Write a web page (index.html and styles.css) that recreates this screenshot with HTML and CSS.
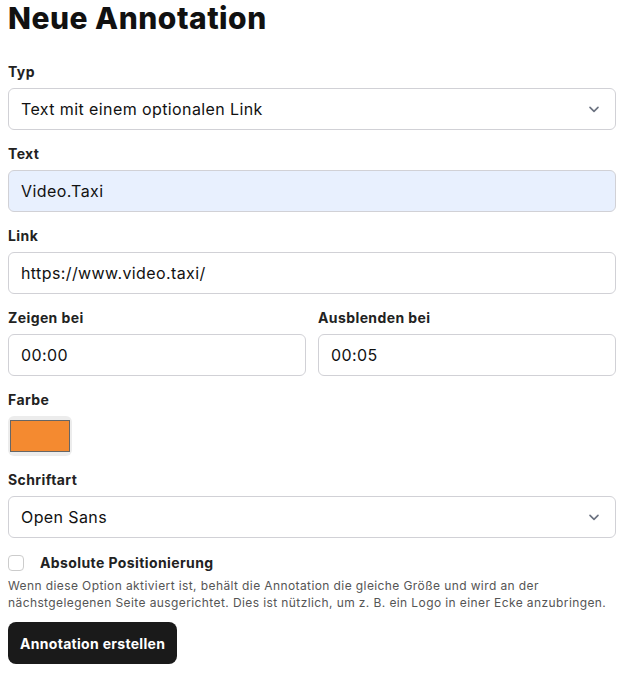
FILE: index.html
```html
<!DOCTYPE html>
<html lang="de">
<head>
  <meta charset="UTF-8" />
  <meta name="viewport" content="width=device-width, initial-scale=1" />
  <title>Neue Annotation</title>
  <link rel="stylesheet" href="styles.css">
</head>
<body>
  <form class="annotation-form">
    <h1>Neue Annotation</h1>

    <div class="field">
      <label for="type">Typ</label>
      <div class="select-wrap">
        <select id="type">
          <option>Text mit einem optionalen Link</option>
          <option>Bild</option>
        </select>
        <svg class="chevron" width="16" height="16" viewBox="0 0 20 20" aria-hidden="true">
          <path d="M5 8l5 5 5-5" fill="none" stroke="#6b7280" stroke-width="2" stroke-linecap="round" stroke-linejoin="round"/>
        </svg>
      </div>
    </div>

    <div class="field">
      <label for="text">Text</label>
      <input type="text" id="text" class="autofilled" value="Video.Taxi" />
    </div>

    <div class="field">
      <label for="link">Link</label>
      <input type="text" id="link" value="https://www.video.taxi/" />
    </div>

    <div class="row">
      <div class="field">
        <label for="start">Zeigen bei</label>
        <input type="text" id="start" value="00:00" />
      </div>
      <div class="field">
        <label for="end">Ausblenden bei</label>
        <input type="text" id="end" value="00:05" />
      </div>
    </div>

    <div class="field">
      <label for="color">Farbe</label>
      <input type="color" id="color" class="color" value="#f48a30" />
    </div>

    <div class="field">
      <label for="font">Schriftart</label>
      <div class="select-wrap">
        <select id="font">
          <option>Open Sans</option>
          <option>Roboto</option>
          <option>Lato</option>
        </select>
        <svg class="chevron" width="16" height="16" viewBox="0 0 20 20" aria-hidden="true">
          <path d="M5 8l5 5 5-5" fill="none" stroke="#6b7280" stroke-width="2" stroke-linecap="round" stroke-linejoin="round"/>
        </svg>
      </div>
    </div>

    <div class="check">
      <input type="checkbox" id="absolute" />
      <label for="absolute">Absolute Positionierung</label>
    </div>
    <p class="hint">Wenn diese Option aktiviert ist, behält die Annotation die gleiche Größe und wird an der nächstgelegenen Seite ausgerichtet. Dies ist nützlich, um z. B. ein Logo in einer Ecke anzubringen.</p>

    <button type="submit">Annotation erstellen</button>
  </form>
</body>
</html>
```

FILE: styles.css
```css
* {
  box-sizing: border-box;
}
body {
  margin: 0;
  padding: 0 8px;
  font-family: Inter, 'Noto Sans', sans-serif;
  letter-spacing: 0.4px;
  color: #111;
  background: #fff;
}

h1 {
  margin: 0 0 28px;
  font-size: 30px;
  line-height: 36px;
  font-weight: 800;
  letter-spacing: 0.5px;
}

.field {
  margin-bottom: 16px;
}

.field label {
  display: block;
  font-size: 14px;
  line-height: 16px;
  font-weight: 700;
  color: #222;
  margin-bottom: 8px;
}

input[type="text"],
select {
  width: 100%;
  height: 42px;
  padding: 0 12px;
  border: 1px solid #d1d1d6;
  border-radius: 6px;
  background: #fff;
  font-family: inherit;
  font-size: 16px;
  letter-spacing: 0.4px;
  color: #111;
  outline: none;
}

input.autofilled {
  background: #e8f0fe;
}

.select-wrap {
  position: relative;
}
select {
  appearance: none;
  -webkit-appearance: none;
}
.chevron {
  position: absolute;
  right: 14px;
  top: 13px;
  pointer-events: none;
}

.row {
  display: grid;
  grid-template-columns: 1fr 1fr;
  gap: 12px;
}

/* Farbwähler */
input.color {
  display: block;
  width: 64px;
  height: 40px;
  padding: 4px 2px;
  border: none;
  border-radius: 6px;
  background: #ececec;
  cursor: pointer;
  -webkit-appearance: none;
  appearance: none;
}
input.color::-webkit-color-swatch-wrapper {
  padding: 0;
}
input.color::-webkit-color-swatch {
  border: 1px solid #666;
  border-radius: 0;
}

.check {
  display: flex;
  align-items: center;
  gap: 16px;
  margin-top: 14px;
}
.check input {
  margin: 0;
  width: 16px;
  height: 16px;
  border: 1px solid #ccc;
  border-radius: 4px;
  background: #fff;
  -webkit-appearance: none;
  appearance: none;
}
.check label {
  font-size: 14px;
  font-weight: 700;
  color: #222;
}

.hint {
  margin: 6px 0 11px;
  font-size: 12px;
  line-height: 17px;
  color: #555;
}

button {
  height: 42px;
  padding: 0 12px;
  border: none;
  border-radius: 8px;
  background: #1a1a1a;
  color: #fff;
  font-family: inherit;
  font-size: 14px;
  font-weight: 700;
  letter-spacing: 0.3px;
  cursor: pointer;
}
```
